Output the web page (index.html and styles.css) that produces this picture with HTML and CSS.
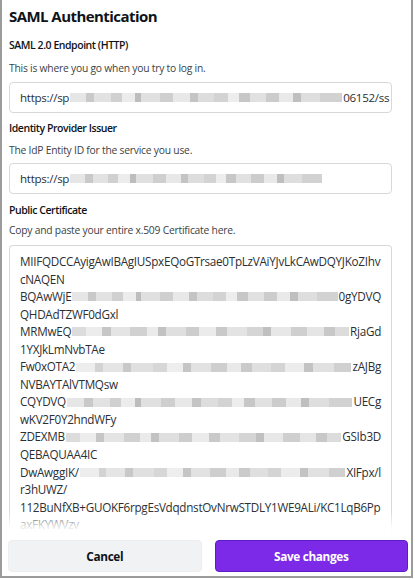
FILE: index.html
```html
<!DOCTYPE html>
<html lang="en">
<head>
<meta charset="utf-8">
<title>SAML Authentication</title>
<link rel="stylesheet" href="styles.css">
</head>
<body>
<div class="frame">
  <div class="scroll">
    <h1 class="title">SAML Authentication</h1>

    <div class="label l1">SAML 2.0 Endpoint (HTTP)</div>
    <div class="help h1">This is where you go when you try to log in.</div>
    <div class="input i1">
      <span>https://sp</span><span class="blur b-in1"></span><span>06152/ss</span>
    </div>

    <div class="label l2">Identity Provider Issuer</div>
    <div class="help h2">The IdP Entity ID for the service you use.</div>
    <div class="input i2">
      <span>https://sp</span><span class="blur b-in2"></span>
    </div>

    <div class="label l3">Public Certificate</div>
    <div class="help h3">Copy and paste your entire x.509 Certificate here.</div>
    <div class="cert">
      <div class="line">MIIFQDCCAyigAwIBAgIUSpxEQoGTrsae0TpLzVAiYJvLkCAwDQYJKoZIhv</div>
      <div class="line">cNAQEN</div>
      <div class="line row"><span>BQAwWjE</span><span class="blur b1"></span><span>0gYDVQ</span></div>
      <div class="line">QHDAdTZWF0dGxl</div>
      <div class="line row"><span>MRMwEQ</span><span class="blur b2"></span><span>RjaGd</span></div>
      <div class="line">1YXJkLmNvbTAe</div>
      <div class="line row"><span>Fw0xOTA2</span><span class="blur b3"></span><span>zAJBg</span></div>
      <div class="line">NVBAYTAlVTMQsw</div>
      <div class="line row"><span>CQYDVQ</span><span class="blur b1"></span><span>UECg</span></div>
      <div class="line">wKV2F0Y2hndWFy</div>
      <div class="line row"><span>ZDEXMB</span><span class="blur b2"></span><span>GSIb3D</span></div>
      <div class="line">QEBAQUAA4IC</div>
      <div class="line row"><span>DwAwggIK/</span><span class="blur b3"></span><span>XIFpx/l</span></div>
      <div class="line">r3hUWZ/</div>
      <div class="line">112BuNfXB+GUOKF6rpgEsVdqdnstOvNrwSTDLY1WE9ALi/KC1LqB6Pp</div>
      <div class="line">axFKYWVzv</div>
    </div>
  </div>
  <div class="footer">
    <button class="btn cancel">Cancel</button>
    <button class="btn save">Save changes</button>
  </div>
</div>
</body>
</html>
```

FILE: styles.css
```css
* { box-sizing: border-box; }

html, body {
  margin: 0;
  padding: 0;
  background: #ffffff;
}

body {
  font-family: "Open Sans", "Noto Sans", sans-serif;
  color: #0e1318;
}

.frame {
  width: 413px;
  height: 578px;
  border: 2px solid #9b9b9b;
  border-top: none;
  display: flex;
  flex-direction: column;
  overflow: hidden;
  background: #fff;
}

.scroll {
  flex: 1;
  min-height: 0;
  overflow: hidden;
  position: relative;
  padding: 0 19px 0 7px;
}

.scroll::after {
  content: "";
  position: absolute;
  left: 0;
  right: 0;
  bottom: 0;
  height: 22px;
  background: linear-gradient(rgba(255,255,255,0), rgba(255,255,255,0.85) 70%, #fff);
}

.title {
  margin: 0;
  padding-top: 4px;
  font-size: 15px;
  line-height: 24px;
  font-weight: 700;
  letter-spacing: -0.55px;
  color: #0e1318;
}

.label {
  font-size: 10.5px;
  line-height: 16px;
  font-weight: 600;
  letter-spacing: -0.45px;
  color: #0e1318;
}

.help {
  font-size: 10.3px;
  line-height: 16px;
  letter-spacing: -0.22px;
  color: #3b3f45;
}

.l1 { margin-top: 9px; }
.h1 { margin-top: 7px; }
.i1 { margin-top: 6px; }
.l2 { margin-top: 7px; }
.h2 { margin-top: 6px; }
.i2 { margin-top: 5px; }
.l3 { margin-top: 8px; }
.h3 { margin-top: 4px; }

.input {
  height: 31px;
  border: 1px solid #d6d8dc;
  border-radius: 4px;
  padding: 0 0 0 10px;
  display: flex;
  align-items: center;
  white-space: nowrap;
  overflow: hidden;
  font-size: 11.6px;
  letter-spacing: -0.3px;
  color: #2b2f33;
}

.blur {
  display: inline-block;
  height: 9px;
  flex: none;
  background:
    linear-gradient(90deg,
      #e6e6e6 0 6%, #c9c9c9 6% 9%, #e2e2e2 9% 15%, #d0d0d0 15% 19%,
      #ececec 19% 24%, #bdbdbd 24% 26%, #e0e0e0 26% 33%, #cfcfcf 33% 38%,
      #e8e8e8 38% 44%, #c4c4c4 44% 47%, #dddddd 47% 53%, #d3d3d3 53% 58%,
      #ededed 58% 62%, #c7c7c7 62% 66%, #e1e1e1 66% 72%, #cccccc 72% 77%,
      #e9e9e9 77% 82%, #bfbfbf 82% 85%, #dedede 85% 92%, #d2d2d2 92% 100%);
}

.b-in1 { width: 272px; margin: 0 1px 0 1px; }
.b-in2 { width: 252px; margin-left: 1px; }

.cert {
  margin-top: 7px;
  border: 1px solid #d6d8dc;
  border-bottom: none;
  border-radius: 4px 4px 0 0;
  padding: 7px 0 0 10px;
  font-size: 11.7px;
  line-height: 17.55px;
  letter-spacing: -0.28px;
  color: #2b2f33;
}

.line {
  white-space: nowrap;
}

.row {
  display: flex;
  align-items: center;
  width: 361px;
}

.row .blur {
  flex: 1;
  margin: 0 1px;
}

.b2 {
  background:
    linear-gradient(90deg,
      #dcdcdc 0 5%, #ececec 5% 11%, #c6c6c6 11% 14%, #e4e4e4 14% 21%,
      #d1d1d1 21% 27%, #eaeaea 27% 31%, #c2c2c2 31% 34%, #dfdfdf 34% 41%,
      #cdcdcd 41% 46%, #ebebeb 46% 52%, #c9c9c9 52% 56%, #e3e3e3 56% 63%,
      #d5d5d5 63% 69%, #c0c0c0 69% 72%, #e7e7e7 72% 79%, #cfcfcf 79% 85%,
      #e5e5e5 85% 91%, #c8c8c8 91% 95%, #dcdcdc 95% 100%);
}

.b3 {
  background:
    linear-gradient(90deg,
      #ededed 0 7%, #d3d3d3 7% 10%, #e5e5e5 10% 17%, #c8c8c8 17% 20%,
      #e0e0e0 20% 28%, #d7d7d7 28% 33%, #eeeeee 33% 39%, #c5c5c5 39% 42%,
      #e2e2e2 42% 49%, #cecece 49% 55%, #e9e9e9 55% 60%, #cacaca 60% 64%,
      #dfdfdf 64% 71%, #d4d4d4 71% 76%, #ececec 76% 83%, #c3c3c3 83% 86%,
      #e1e1e1 86% 94%, #d0d0d0 94% 100%);
}

.footer {
  flex: none;
  display: flex;
  gap: 13px;
  padding: 7px 3px 4px 6px;
  background: #fff;
}

.btn {
  flex: 1;
  height: 32px;
  border-radius: 4px;
  font-family: "Open Sans", "Noto Sans", sans-serif;
  font-size: 11.8px;
  font-weight: 700;
  letter-spacing: -0.35px;
  cursor: pointer;
}

.cancel {
  background: #f1f2f4;
  border: 1px solid #eceef1;
  color: #0e1318;
}

.save {
  background: #7d2ae8;
  border: 1px solid #5b1dc4;
  color: #ffffff;
}
```
